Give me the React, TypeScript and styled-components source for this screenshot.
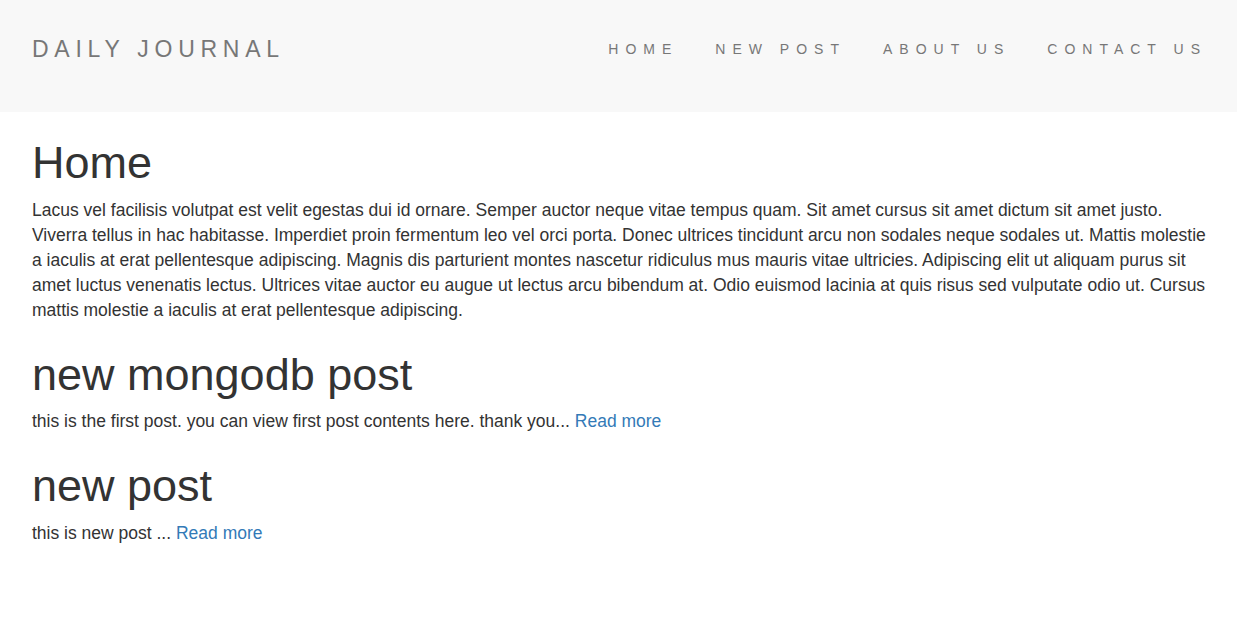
import React from "react";
import styled, { createGlobalStyle } from "styled-components";

const GlobalStyle = createGlobalStyle`
  html, body { margin: 0; padding: 0; background: #fff; }
  body {
    font-family: "Liberation Sans", Arial, Helvetica, sans-serif;
    color: #333;
    font-size: 17.5px;
    line-height: 25px;
  }
  * { box-sizing: border-box; }
`;

const Navbar = styled.nav`
  background: #f8f8f8;
  height: 112px;
  display: flex;
  align-items: center;
  justify-content: space-between;
  padding: 0 37px 0 32px;
`;

const Brand = styled.a`
  color: #777;
  font-size: 23px;
  letter-spacing: 0.25em;
  text-decoration: none;
  text-transform: uppercase;
  white-space: nowrap;
  margin-top: -14px;
`;

const NavList = styled.ul`
  list-style: none;
  margin: -14px 0 0;
  padding: 0;
  display: flex;
  gap: 44px;
`;

const NavLink = styled.a`
  color: #777;
  font-size: 14px;
  letter-spacing: 0.5em;
  text-decoration: none;
  text-transform: uppercase;
  white-space: nowrap;
  margin-right: -0.5em;
`;

const Main = styled.main`
  padding: 6px 30px 20px 32px;
`;

const Title = styled.h1`
  font-size: 45px;
  font-weight: 400;
  line-height: 1.1;
  margin: 20px 0 10px;
`;

const PostTitle = styled(Title)`
  margin-top: 27px;
`;

const Text = styled.p`
  margin: 0 0 10px;
`;

const Link = styled.a`
  color: #337ab7;
  text-decoration: none;
`;

const posts = [
  {
    title: "new mongodb post",
    body: "this is the first post. you can view first post contents here. thank you...",
  },
  { title: "new post", body: "this is new post ..." },
];

export default function App() {
  return (
    <>
      <GlobalStyle />
      <Navbar>
        <Brand href="#">Daily Journal</Brand>
        <NavList>
          <li><NavLink href="#">Home</NavLink></li>
          <li><NavLink href="#">New Post</NavLink></li>
          <li><NavLink href="#">About Us</NavLink></li>
          <li><NavLink href="#">Contact Us</NavLink></li>
        </NavList>
      </Navbar>
      <Main>
        <Title>Home</Title>
        <Text>
          Lacus vel facilisis volutpat est velit egestas dui id ornare. Semper auctor neque vitae tempus quam. Sit amet cursus sit amet dictum sit amet justo. Viverra tellus in hac habitasse. Imperdiet proin fermentum leo vel orci porta. Donec ultrices tincidunt arcu non sodales neque sodales ut. Mattis molestie a iaculis at erat pellentesque adipiscing. Magnis dis parturient montes nascetur ridiculus mus mauris vitae ultricies. Adipiscing elit ut aliquam purus sit amet luctus venenatis lectus. Ultrices vitae auctor eu augue ut lectus arcu bibendum at. Odio euismod lacinia at quis risus sed vulputate odio ut. Cursus mattis molestie a iaculis at erat pellentesque adipiscing.
        </Text>
        {posts.map((p) => (
          <article key={p.title}>
            <PostTitle>{p.title}</PostTitle>
            <Text>
              {p.body} <Link href="#">Read more</Link>
            </Text>
          </article>
        ))}
      </Main>
    </>
  );
}
